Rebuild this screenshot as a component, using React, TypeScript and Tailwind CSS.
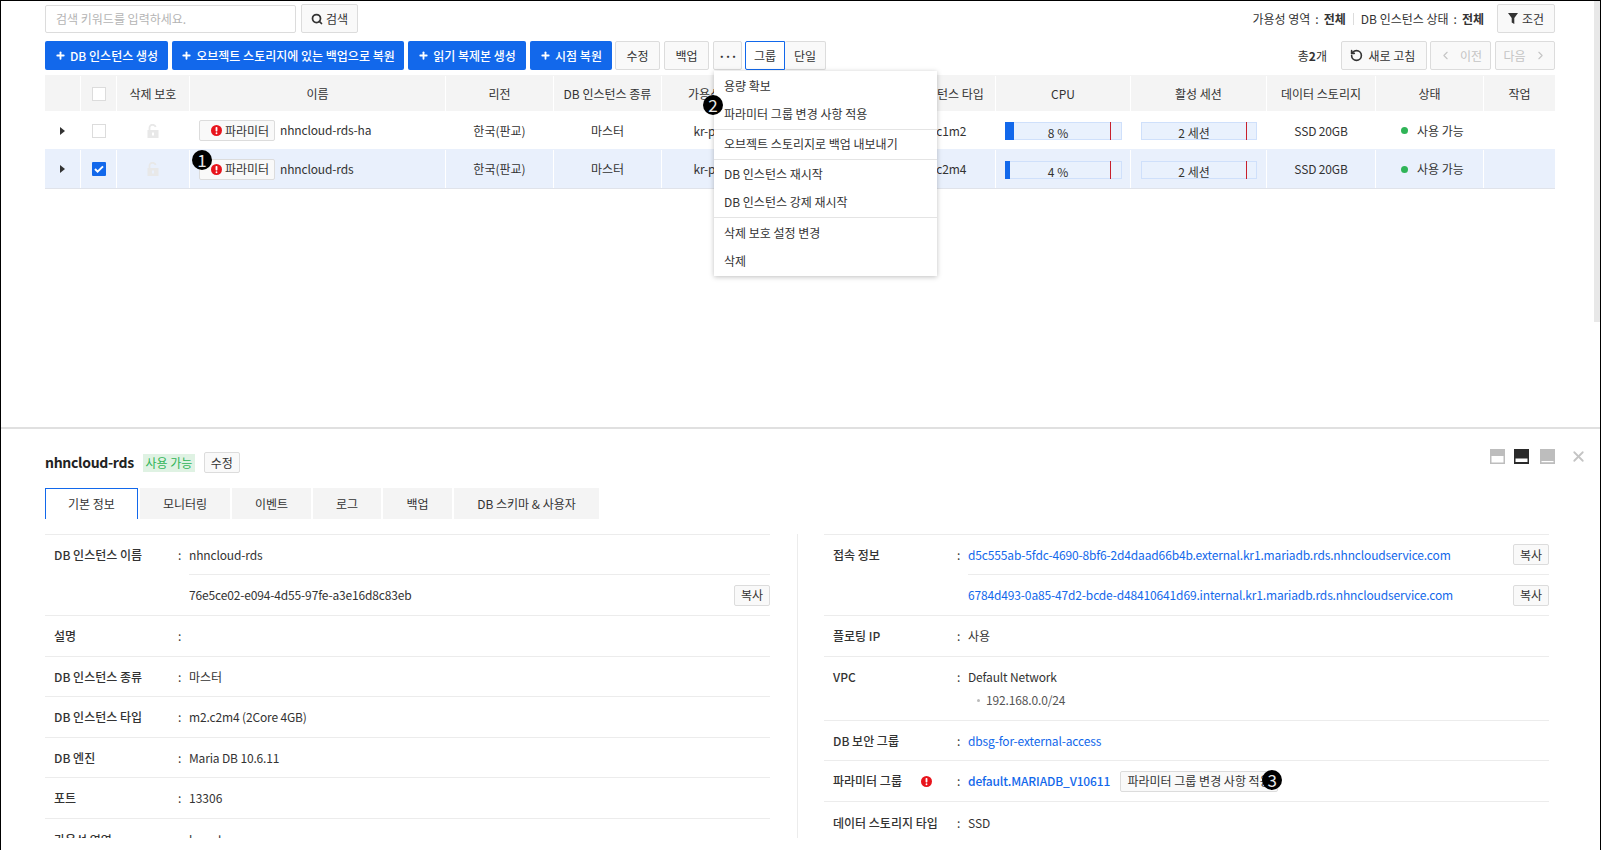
import { ChevronLeft, ChevronRight, Plus, RotateCcw, Search, X } from 'lucide-react';
import type { ReactNode } from 'react';

const columns = ['', '', '삭제 보호', '이름', '리전', 'DB 인스턴스 종류', '가용성 영역', '', 'DB 인스턴스 타입', 'CPU', '활성 세션', '데이터 스토리지', '상태', '작업'];

const instances = [
  { name: 'nhncloud-rds-ha', type: 'm2.c1m2', cpu: 8, checked: false },
  { name: 'nhncloud-rds', type: 'm2.c2m4', cpu: 4, checked: true },
];

const gridCols = 'grid grid-cols-[36px_36px_73px_256px_108px_108px_111px_112px_111px_135px_136px_109px_108px_71px]';
const btn = 'flex items-center justify-center h-full border border-[#dcdcdc] bg-[#f9f9f9] rounded-[2px] text-[#333]';
const smallBtn = 'flex items-center justify-center h-[21px] border border-[#dcdcdc] bg-[#f9f9f9] rounded-[2px] text-[#333]';
const latin = 'tracking-[-0.15px]';

function NumberBadge({ n, className }: { n: number; className: string }) {
  return (
    <span className={`absolute z-20 flex items-center justify-center w-5 h-5 rounded-full bg-black text-[#e8e8e8] text-[17px] leading-5 ${className}`}>
      {n}
    </span>
  );
}

function AlertIcon({ size = 12 }: { size?: number }) {
  return (
    <svg width={size} height={size} viewBox="0 0 12 12" className="shrink-0">
      <circle cx="6" cy="6" r="6" fill="#e8141c" />
      <rect x="5" y="2.2" width="2" height="4.8" rx="0.8" fill="#fff" />
      <rect x="5" y="8" width="2" height="2" rx="1" fill="#fff" />
    </svg>
  );
}

function LockIcon() {
  return (
    <svg width="12" height="14" viewBox="0 0 12 14">
      <path d="M2.5 6V3.6C2.5 1.9 3.9.8 5.6.8c1.5 0 2.7.8 3.1 2.2" fill="none" stroke="#e8e8e8" strokeWidth="1.8" />
      <path d="M.5 6h11v8H.5zM5 8.5v3h2v-3z" fill="#e8e8e8" fillRule="evenodd" />
    </svg>
  );
}

function UsageBar({ label, value, lineAt }: { label: string; value: number; lineAt: number }) {
  return (
    <div className="relative h-[18px] w-full border border-[#cfe0fb] bg-[#e9f1fd]">
      {value > 0 && <div className="absolute -left-px -top-px -bottom-px bg-[#1268eb]" style={{ width: `${value * 1.15}px` }} />}
      <div className="absolute -top-px -bottom-px w-px bg-[#c8202c]" style={{ left: `${lineAt}px` }} />
      <div className="pt-[2px] text-center leading-[15px]" style={{ width: `${lineAt}px` }}>{label}</div>
    </div>
  );
}

function PanelIcon({ kind }: { kind: 'top' | 'half' | 'bottom' }) {
  const fill = kind === 'half' ? '#2a2a2a' : '#bdbdbd';
  return (
    <svg width="15" height="15" viewBox="0 0 15 15">
      <rect width="15" height="15" fill={fill} />
      {kind === 'top' && <rect x="1.5" y="7" width="12" height="6.5" fill="#fff" />}
      {kind === 'half' && <rect x="1.5" y="9.5" width="12" height="3.5" fill="#fff" />}
      {kind === 'bottom' && <rect x="1.5" y="12" width="12" height="1.2" fill="#fff" />}
    </svg>
  );
}

function MenuItem({ children }: { children: ReactNode }) {
  return <div className="relative flex items-center h-7 px-[10px] text-[#333]">{children}</div>;
}

function CopyButton() {
  return <button className={`${smallBtn} w-9 ml-auto shrink-0 tracking-normal`}>복사</button>;
}

function LeftRow({ label, children, height = 'h-[41px]', line = true }: { label?: string; children?: ReactNode; height?: string; line?: boolean }) {
  return (
    <div className={`flex items-center ${height} ${line ? 'border-b border-[#ececec]' : ''}`}>
      <div className="w-[133px] pl-[9px] font-medium text-[#333]">{label}</div>
      <div className="w-[11px] text-[#333]">{label ? ':' : ''}</div>
      <div className="flex-1 flex items-center min-w-0">{children}</div>
    </div>
  );
}

function RightRow({ label, children, height = 'h-[41px]', line = true, top = false }: { label?: ReactNode; children?: ReactNode; height?: string; line?: boolean; top?: boolean }) {
  return (
    <div className={`flex ${top ? 'items-start pt-3' : 'items-center'} ${height} ${line ? 'border-b border-[#ececec]' : ''}`}>
      <div className="w-[133px] pl-[9px] font-medium text-[#333] flex items-center">{label}</div>
      <div className="w-[11px] text-[#333]">{label ? ':' : ''}</div>
      <div className="flex-1 flex items-center min-w-0">{children}</div>
    </div>
  );
}

export default function App() {
  return (
    <div className="w-[1601px] h-[850px] overflow-hidden flex flex-col bg-white border-l border-r border-t border-black text-[12px] leading-4 text-[#333] font-['Noto_Sans_CJK_KR','Noto_Sans',sans-serif]">
      {/* List area */}
      <section className="relative h-[426px] shrink-0 pl-[44px] pr-[45px] pt-[3px]">
        <div className="absolute right-0 top-0 w-[6px] h-[321px] bg-[#e8e8e8]" />

        <div className="flex items-center h-[29px]">
          <div className="flex items-center w-[251px] h-7 px-[10px] border border-[#dcdcdc] rounded-[2px] text-[#b4b4b4]">검색 키워드를 입력하세요.</div>
          <button className={`${btn} w-[57px] ml-[5px] gap-[3px]`}>
            <Search size={12} strokeWidth={3.5} />
            검색
          </button>
          <div className="ml-auto flex items-center h-full">
            <span>가용성 영역<span className="mx-[5px]">:</span><b className="font-bold">전체</b></span>
            <span className="mx-[7px] h-3 border-l border-[#dcdcdc]" />
            <span>DB 인스턴스 상태<span className="mx-[5px]">:</span><b className="font-bold">전체</b></span>
            <button className={`${btn} w-[58px] ml-[13px] gap-1`}>
              <svg width="10" height="11" viewBox="0 0 10 11"><path d="M0 0h10L6.3 5v6L3.7 9.5V5z" fill="#333" /></svg>
              조건
            </button>
          </div>
        </div>

        <div className="flex items-stretch gap-[4px] h-[29px] mt-2">
          {[
            { label: 'DB 인스턴스 생성', w: 'w-[123px]' },
            { label: '오브젝트 스토리지에 있는 백업으로 복원', w: 'w-[232px]' },
            { label: '읽기 복제본 생성', w: 'w-[118px]' },
            { label: '시점 복원', w: 'w-[82px]' },
          ].map((b) => (
            <button key={b.label} className={`flex items-center justify-center gap-[4px] ${b.w} bg-[#1268eb] text-white font-medium rounded-[2px]`}>
              <Plus size={11} strokeWidth={4} />
              {b.label}
            </button>
          ))}
          <button className={`${btn} w-[45px] -ml-px`}>수정</button>
          <button className={`${btn} w-[45px]`}>백업</button>
          <button className={`${btn} w-[29px] border-[#aaa] font-bold tracking-[-1px]`}>···</button>
          <div className="flex -ml-px">
            <button className="w-[40px] bg-white border border-[#1268eb] rounded-l-[2px]">그룹</button>
            <button className={`${btn} w-[41px] border-l-0`}>단일</button>
          </div>
          <div className="ml-auto flex items-center">
            <span className="mr-[14px]">총<b className="font-bold">2</b>개</span>
            <button className={`${btn} w-[86px] gap-[6px] pr-[3px]`}>
              <RotateCcw size={13} strokeWidth={3} />
              새로 고침
            </button>
            <button className={`${btn} w-[61px] ml-[3px] gap-2 !text-[#c4c4c4]`}>
              <ChevronLeft size={13} />
              이전
            </button>
            <button className={`${btn} w-[60px] ml-[4px] gap-2 !text-[#c4c4c4]`}>
              다음
              <ChevronRight size={13} />
            </button>
          </div>
        </div>

        {/* Table */}
        <div className="relative mt-[5px]">
          <div className={`${gridCols} h-9 pt-px bg-[#f4f4f4]`}>
            {columns.map((c, i) => (
              <div key={i} className="flex items-center justify-center border-r border-white last:border-r-0">
                {i === 1 ? <span className="w-[14px] h-[14px] border border-[#dcdcdc] bg-white" /> : c}
              </div>
            ))}
          </div>
          {instances.map((inst, idx) => (
            <div key={inst.name} className={`${gridCols} pt-px ${idx === 0 ? 'h-[38px]' : 'h-10 bg-[#e9f0fc] border-b border-[#e0e3ea]'}`}>
              <div className="flex items-center justify-center border-r border-white">
                <svg width="5" height="8" viewBox="0 0 5 8"><path d="M0 0l5 4-5 4z" fill="#333" /></svg>
              </div>
              <div className="flex items-center justify-center border-r border-white">
                {inst.checked ? (
                  <span className="flex items-center justify-center w-[14px] h-[14px] bg-[#1268eb] rounded-[1px]">
                    <svg width="10" height="8" viewBox="0 0 10 8"><path d="M1 4l2.6 2.6L9 1.4" fill="none" stroke="#fff" strokeWidth="2" /></svg>
                  </span>
                ) : (
                  <span className="w-[14px] h-[14px] border border-[#dcdcdc] bg-white" />
                )}
              </div>
              <div className="flex items-center justify-center border-r border-white"><LockIcon /></div>
              <div className="flex items-center pl-[9px] border-r border-white">
                <div className="relative">
                  {inst.checked && <NumberBadge n={1} className="-left-[7px] -top-[9px]" />}
                  <button className="flex items-center gap-[3px] w-[76px] h-[21px] pl-[11px] border border-[#dcdcdc] bg-[#f9f9f9] rounded-[2px]">
                    <AlertIcon size={11} />
                    파라미터
                  </button>
                </div>
                <span className={`ml-[5px] -mt-px ${latin}`}>{inst.name}</span>
              </div>
              <div className="flex items-center justify-center border-r border-white">한국(판교)</div>
              <div className="flex items-center justify-center border-r border-white">마스터</div>
              <div className={`flex items-center justify-center border-r border-white ${latin}`}>kr-pub-a</div>
              <div className="border-r border-white" />
              <div className={`flex items-center justify-center border-r border-white pl-[2px] ${latin}`}>{inst.type}</div>
              <div className="flex items-center pl-[9px] pr-[8px] pt-px border-r border-white">
                <UsageBar label={`${inst.cpu} %`} value={inst.cpu} lineAt={104} />
              </div>
              <div className="flex items-center pl-[10px] pr-[9px] pt-px border-r border-white">
                <UsageBar label="2 세션" value={0} lineAt={104} />
              </div>
              <div className={`flex items-center justify-center border-r border-white ${latin}`}>SSD 20GB</div>
              <div className="flex items-center pl-[25px] gap-[9px] border-r border-white">
                <span className="w-[7px] h-[7px] rounded-full bg-[#2fb457]" />
                사용 가능
              </div>
              <div />
            </div>
          ))}

          {/* Actions menu */}
          <div className="absolute left-[669px] -top-[4px] z-10 w-[223px] bg-white shadow-[0_1px_5px_rgba(0,0,0,0.25)]">
            <div className="py-px">
              <MenuItem>용량 확보</MenuItem>
              <MenuItem>
                <NumberBadge n={2} className="-left-[11px] top-[-5px]" />
                파라미터 그룹 변경 사항 적용
              </MenuItem>
            </div>
            <div className="pb-px border-t border-[#e4e4e4]">
              <MenuItem>오브젝트 스토리지로 백업 내보내기</MenuItem>
            </div>
            <div className="pb-px border-t border-[#e4e4e4]">
              <MenuItem>DB 인스턴스 재시작</MenuItem>
              <MenuItem>DB 인스턴스 강제 재시작</MenuItem>
            </div>
            <div className="py-px border-t border-[#e4e4e4]">
              <MenuItem>삭제 보호 설정 변경</MenuItem>
              <MenuItem>삭제</MenuItem>
            </div>
          </div>
        </div>
      </section>

      <div className="h-[2px] shrink-0 bg-[#e0e0e0]" />

      {/* Detail panel */}
      <section className="flex-1 min-h-0 flex flex-col">
        <div className="flex justify-between h-[59px] shrink-0 pl-[44px] pr-[13px]">
          <div className="flex items-center gap-[4px] h-[21px] mt-[23px]">
            <span className="text-[14px] font-bold text-[#222] mr-[5px] -mt-px tracking-[-0.3px]">nhncloud-rds</span>
            <span className="flex items-center justify-center w-[52px] h-[18px] bg-[#dff2e3] text-[#2fb457]">사용 가능</span>
            <button className={`${smallBtn} w-9 ml-[5px]`}>수정</button>
          </div>
          <div className="flex items-center h-[15px] mt-[20px]">
            <PanelIcon kind="top" />
            <span className="w-[9px]" />
            <PanelIcon kind="half" />
            <span className="w-[11px]" />
            <PanelIcon kind="bottom" />
            <X size={17} strokeWidth={2.5} className="text-[#c4c4c4] ml-[15px]" />
          </div>
        </div>

        <div className="flex gap-[2px] h-[31px] shrink-0 pl-[44px]">
          <div className="flex items-center justify-center w-[93px] border border-b-0 border-[#1268eb]">기본 정보</div>
          {[
            { label: '모니터링', w: 'w-[90px]' },
            { label: '이벤트', w: 'w-[79px]' },
            { label: '로그', w: 'w-[68px]' },
            { label: '백업', w: 'w-[69px]' },
            { label: 'DB 스키마 & 사용자', w: 'w-[145px]' },
          ].map((t) => (
            <div key={t.label} className={`flex items-center justify-center ${t.w} bg-[#f4f4f4]`}>{t.label}</div>
          ))}
        </div>

        <div className="flex h-[304px] shrink-0 mt-[15px] pl-[44px] overflow-hidden">
          <div className="w-[725px] shrink-0 border-t border-[#ececec]">
            <div className="flex items-center h-10">
              <div className="w-[133px] pl-[9px] font-medium">DB 인스턴스 이름</div>
              <div className="w-[11px]">:</div>
              <div className={`flex-1 h-full flex items-center border-b border-[#ececec] ${latin}`}>nhncloud-rds</div>
            </div>
            <LeftRow>
              <span className={latin}>76e5ce02-e094-4d55-97fe-a3e16d8c83eb</span>
              <CopyButton />
            </LeftRow>
            <LeftRow label="설명" />
            <LeftRow label="DB 인스턴스 종류" height="h-10">마스터</LeftRow>
            <LeftRow label="DB 인스턴스 타입"><span className={latin}>m2.c2m4 (2Core 4GB)</span></LeftRow>
            <LeftRow label="DB 엔진" height="h-10"><span className={latin}>Maria DB 10.6.11</span></LeftRow>
            <LeftRow label="포트">13306</LeftRow>
            <LeftRow label="가용성 영역" line={false}><span className={latin}>kr-pub-a</span></LeftRow>
          </div>

          <div className="ml-[27px] border-l border-[#ececec]" />

          <div className="w-[725px] shrink-0 ml-[26px] border-t border-[#ececec]">
            <div className="flex items-center h-10">
              <div className="w-[133px] pl-[9px] font-medium">접속 정보</div>
              <div className="w-[11px]">:</div>
              <div className={`flex-1 h-full flex items-center border-b border-[#ececec] text-[#1268eb] ${latin}`}>
                d5c555ab-5fdc-4690-8bf6-2d4daad66b4b.external.kr1.mariadb.rds.nhncloudservice.com
                <CopyButton />
              </div>
            </div>
            <RightRow>
              <span className={`text-[#1268eb] ${latin}`}>6784d493-0a85-47d2-bcde-d48410641d69.internal.kr1.mariadb.rds.nhncloudservice.com</span>
              <CopyButton />
            </RightRow>
            <RightRow label="플로팅 IP">사용</RightRow>
            <RightRow label="VPC" height="h-16" top>
              <div className={`flex flex-col gap-[7px] ${latin}`}>
                <span>Default Network</span>
                <span className="flex items-center text-[#555] pl-[9px] gap-[6px]">
                  <span className="w-[3px] h-[3px] rounded-full bg-[#bbb]" />
                  192.168.0.0/24
                </span>
              </div>
            </RightRow>
            <RightRow label="DB 보안 그룹" height="h-10"><span className={`text-[#1268eb] ${latin}`}>dbsg-for-external-access</span></RightRow>
            <RightRow
              label={
                <>
                  파라미터 그룹
                  <span className="ml-[19px]"><AlertIcon size={11} /></span>
                </>
              }
            >
              <span className={`text-[#1268eb] font-medium ${latin}`}>default.MARIADB_V10611</span>
              <div className="relative ml-[10px]">
                <button className={`${smallBtn} w-[158px]`}>파라미터 그룹 변경 사항 적용</button>
                <NumberBadge n={3} className="-right-[4px] -top-[1px]" />
              </div>
            </RightRow>
            <RightRow label="데이터 스토리지 타입" line={false}>SSD</RightRow>
          </div>
        </div>
      </section>
    </div>
  );
}
